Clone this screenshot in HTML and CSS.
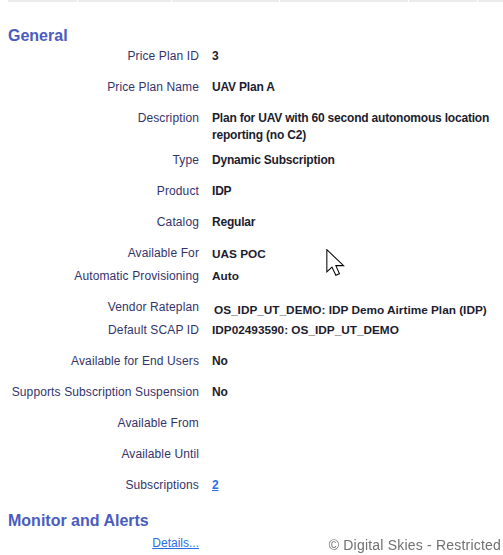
FILE: index.html
```html
<!DOCTYPE html>
<html>
<head>
<meta charset="utf-8">
<link rel="stylesheet" href="styles.css">
</head>
<body>
<div class="tabbar">
  <span class="tab t1"></span><span class="tab t2"></span><span class="tab t3"></span><span class="tab t4"></span><span class="tab t5"></span><span class="tab t6"></span>
</div>
<h2 class="section">General</h2>
<div class="fields">
  <div class="row"><div class="label">Price Plan ID</div><div class="value">3</div></div>
  <div class="row"><div class="label">Price Plan Name</div><div class="value">UAV Plan A</div></div>
  <div class="row tall"><div class="label">Description</div><div class="value">Plan for UAV with 60 second autonomous location reporting (no C2)</div></div>
  <div class="row"><div class="label">Type</div><div class="value">Dynamic Subscription</div></div>
  <div class="row"><div class="label">Product</div><div class="value">IDP</div></div>
  <div class="row"><div class="label">Catalog</div><div class="value">Regular</div></div>
  <div class="row tight"><div class="label">Available For</div><div class="value alt down1">UAS POC</div></div>
  <div class="row"><div class="label">Automatic Provisioning</div><div class="value alt">Auto</div></div>
  <div class="row tight"><div class="label">Vendor Rateplan</div><div class="value alt down3">OS_IDP_UT_DEMO: IDP Demo Airtime Plan (IDP)</div></div>
  <div class="row"><div class="label">Default SCAP ID</div><div class="value alt">IDP02493590: OS_IDP_UT_DEMO</div></div>
  <div class="row"><div class="label">Available for End Users</div><div class="value">No</div></div>
  <div class="row"><div class="label">Supports Subscription Suspension</div><div class="value">No</div></div>
  <div class="row"><div class="label">Available From</div><div class="value"></div></div>
  <div class="row"><div class="label">Available Until</div><div class="value"></div></div>
  <div class="row"><div class="label">Subscriptions</div><div class="value"><a class="link" href="#">2</a></div></div>
</div>
<h2 class="section monitor">Monitor and Alerts</h2>
<div class="details-row"><div class="label"><a class="link" href="#">Details...</a></div></div>
<div class="copyright">© Digital Skies - Restricted</div>
<svg class="cursor" width="19" height="27" viewBox="0 0 13.5 19.5">
  <path d="M0.5 0.5 L0.5 16.5 L4.2 13 L7 19 L9.6 17.9 L7 12 L12.6 12 Z" fill="#fff" stroke="#000" stroke-width="0.75" stroke-linejoin="miter"/>
</svg>
</body>
</html>
```
FILE: styles.css
```css
html, body {
  margin: 0;
  padding: 0;
  background: #fff;
}
body {
  padding-left: 8px;
  font-family: "Liberation Sans", Arial, sans-serif;
  font-size: 12px;
  overflow: hidden;
}
.tabbar {
  display: flex;
  gap: 1px;
  height: 2px;
}
.tab {
  background: #ececec;
  height: 2px;
}
.t1 { width: 69px; }
.t2 { width: 93px; }
.t3 { width: 107px; }
.t4 { width: 128px; }
.t5 { width: 68px; }
.t6 { flex: 1; }
.section {
  margin: 25px 0 0;
  font-size: 16px;
  line-height: 18px;
  font-weight: bold;
  color: #4a5cc0;
}
.section.monitor {
  margin-top: 7px;
}
.fields {
  display: flex;
  flex-direction: column;
}
.row {
  display: grid;
  grid-template-columns: 191px 1fr;
  column-gap: 13px;
  box-sizing: border-box;
  height: 31px;
  padding-top: 3px;
  line-height: 17px;
}
.row.tall { height: 42px; }
.row.tight { height: 23px; }
.label {
  text-align: right;
  color: #33336b;
  white-space: nowrap;
  letter-spacing: 0.12px;
}
.value {
  color: #1c1c2e;
  font-weight: bold;
  letter-spacing: -0.2px;
}
.value.alt {
  font-size: 11.8px;
  letter-spacing: 0;
}
.down1 { padding-top: 1px; }
.down3 { padding-top: 3px; padding-left: 2px; }
.link {
  color: #2a6ee6;
  text-decoration: underline;
  font-weight: normal;
}
.value .link { font-weight: bold; }
.details-row {
  display: grid;
  grid-template-columns: 191px 1fr;
  margin-top: 5px;
  line-height: 17px;
}
.details-row .label { letter-spacing: 0; }
.copyright {
  position: fixed;
  right: 2px;
  bottom: 2px;
  font-size: 14px;
  line-height: 16px;
  color: #707070;
  letter-spacing: 0.2px;
}
.cursor {
  position: absolute;
  left: 326px;
  top: 249px;
}
```
